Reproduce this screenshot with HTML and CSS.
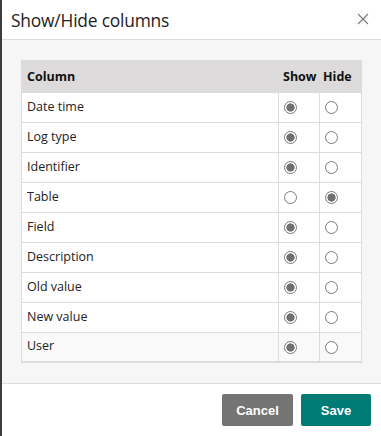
FILE: index.html
```html
<!DOCTYPE html>
<html>
<head>
<meta charset="utf-8">
<link rel="stylesheet" href="styles.css">
</head>
<body>
<div class="dialog">
  <div class="header">
    <div class="title">Show/Hide columns</div>
    <div class="close" aria-label="Close">
      <svg width="12" height="12" viewBox="0 0 12 12"><path d="M1 1L11 11M11 1L1 11" stroke="#777" stroke-width="1.1" fill="none"/></svg>
    </div>
  </div>
  <div class="body">
    <table class="grid">
      <colgroup><col class="w-name"><col class="w-show"><col class="w-hide"></colgroup>
      <thead>
        <tr><th>Column</th><th>Show</th><th class="c-hide">Hide</th></tr>
      </thead>
      <tbody>
        <tr><td>Date time</td><td class="r"><input type="radio" name="r1" checked></td><td class="r"><input type="radio" name="r1"></td></tr>
        <tr><td>Log type</td><td class="r"><input type="radio" name="r2" checked></td><td class="r"><input type="radio" name="r2"></td></tr>
        <tr><td>Identifier</td><td class="r"><input type="radio" name="r3" checked></td><td class="r"><input type="radio" name="r3"></td></tr>
        <tr><td>Table</td><td class="r"><input type="radio" name="r4"></td><td class="r"><input type="radio" name="r4" checked></td></tr>
        <tr><td>Field</td><td class="r"><input type="radio" name="r5" checked></td><td class="r"><input type="radio" name="r5"></td></tr>
        <tr><td>Description</td><td class="r"><input type="radio" name="r6" checked></td><td class="r"><input type="radio" name="r6"></td></tr>
        <tr><td>Old value</td><td class="r"><input type="radio" name="r7" checked></td><td class="r"><input type="radio" name="r7"></td></tr>
        <tr><td>New value</td><td class="r"><input type="radio" name="r8" checked></td><td class="r"><input type="radio" name="r8"></td></tr>
        <tr class="last"><td>User</td><td class="r"><input type="radio" name="r9" checked></td><td class="r"><input type="radio" name="r9"></td></tr>
      </tbody>
    </table>
  </div>
  <div class="footer">
    <button class="btn cancel">Cancel</button>
    <button class="btn save">Save</button>
  </div>
</div>
</body>
</html>
```
FILE: styles.css
```css
html, body {
  margin: 0;
  padding: 0;
  background: #fff;
}
body {
  font-family: "Open Sans", "Noto Sans", sans-serif;
  color: #222;
}
.dialog {
  width: 381px;
  height: 436px;
  box-sizing: border-box;
  border-left: 2px solid #3c3c3c;
  display: flex;
  flex-direction: column;
  background: #fff;
}
.header {
  height: 39px;
  border-bottom: 1px solid #dcdcdc;
  display: flex;
  align-items: center;
  justify-content: space-between;
  padding: 0 12px 0 9px;
  flex: none;
}
.title {
  font-size: 17.4px;
  color: #222;
  letter-spacing: -0.2px;
}
.close {
  width: 12px;
  height: 12px;
  display: flex;
  margin-top: -2px;
}
.body {
  background: #f6f6f6;
  padding: 20px 19px 20px 19px;
  border-bottom: 1px solid #dcdcdc;
  flex: none;
}
.grid {
  width: 341px;
  border-collapse: separate;
  border-spacing: 0;
  border: 1px solid #dcdcdc;
  background: #fff;
  font-size: 12.5px;
  table-layout: fixed;
}
.w-name { width: 256px; }
.w-show { width: 41px; }
.w-hide { width: 42px; }
.grid th {
  background: #dcdada;
  height: 31px;
  box-sizing: border-box;
  font-weight: bold;
  text-align: left;
  padding: 0 0 0 5px;
  color: #111;
  white-space: nowrap;
}
.grid th.c-hide { padding-left: 4px; }
.grid td {
  height: 30px;
  box-sizing: border-box;
  padding: 0 0 3px 5px;
  border-top: 1px solid #dcdcdc;
  color: #222;
}
.grid td.r {
  border-left: 1px solid #dcdcdc;
  padding: 0 0 0 5px;
  text-align: left;
}
.grid tr.last td { background: #f9f9f9; border-bottom: 1px solid #dcdcdc; }
.grid input[type=radio] {
  appearance: none;
  -webkit-appearance: none;
  width: 13px;
  height: 13px;
  margin: 0;
  border: 1px solid #7a7a7a;
  border-radius: 50%;
  background: #fff;
  vertical-align: middle;
  box-sizing: border-box;
  position: relative;
  top: -1px;
}
.grid input[type=radio]:checked {
  background: radial-gradient(circle, #6f6f6f 0 3.8px, #fff 4.4px);
}
.footer {
  flex: 1;
  display: flex;
  justify-content: flex-end;
  align-items: flex-start;
  padding: 10px 10px 0 0;
  gap: 8px;
}
.btn {
  height: 32px;
  border: none;
  border-radius: 2px;
  color: #fff;
  font-family: "Liberation Sans", Arial, sans-serif;
  font-weight: bold;
  font-size: 13px;
  padding: 0;
}
.cancel { width: 71px; background: #747474; }
.save { width: 70px; background: #007b76; }
```
